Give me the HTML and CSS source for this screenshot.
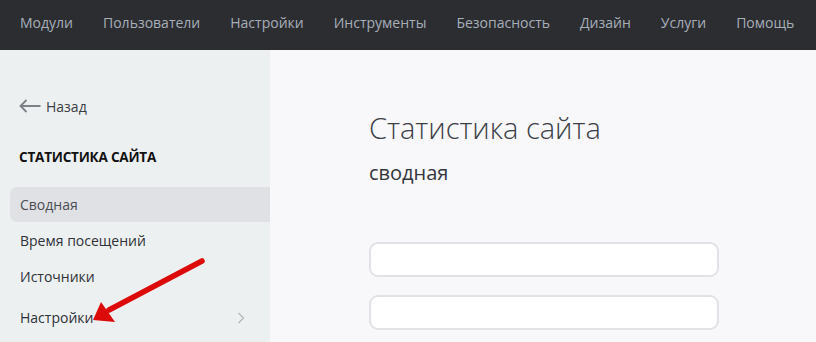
FILE: index.html
```html
<!DOCTYPE html>
<html lang="ru">
<head>
    <meta charset="UTF-8">
    <title>Статистика сайта</title>
    <link rel="stylesheet" href="styles.css">
</head>
<body>
    <div class="topbar">
        <a href="#">Модули</a>
        <a href="#">Пользователи</a>
        <a href="#">Настройки</a>
        <a href="#">Инструменты</a>
        <a href="#">Безопасность</a>
        <a href="#">Дизайн</a>
        <a href="#">Услуги</a>
        <a href="#">Помощь</a>
    </div>

    <div class="layout">
        <div class="sidebar">
            <a href="#" class="back">
                <svg width="22" height="14" viewBox="0 0 22 14"><path d="M7.5 1 L1.5 7 L7.5 13 M1.5 7 H21.5" fill="none" stroke="#7d8085" stroke-width="1.8"/></svg>
                Назад
            </a>
            <div class="section-title">СТАТИСТИКА САЙТА</div>
            <ul class="menu">
                <li class="active">Сводная</li>
                <li>Время посещений</li>
                <li>Источники</li>
                <li class="has-sub">Настройки
                    <svg width="8" height="12" viewBox="0 0 8 12"><path d="M1.5 1 L6.5 6 L1.5 11" fill="none" stroke="#b5b8bd" stroke-width="1.3"/></svg>
                </li>
            </ul>
            <!-- pointer from the screenshot annotation -->
            <svg class="pointer" width="125" height="80" viewBox="0 0 125 80">
                <path d="M117 11 L24 60" stroke="#dd0a0a" stroke-width="5.5" stroke-linecap="round"/>
                <polygon points="8,70 16,52 30,72" fill="#dd0a0a"/>
            </svg>
        </div>

        <div class="content">
            <h1>Статистика сайта</h1>
            <h2>сводная</h2>
            <div class="fields">
                <input type="text">
                <input type="text">
            </div>
        </div>
    </div>
</body>
</html>
```

FILE: styles.css
```css
body {
    margin: 0;
    font-family: "Open Sans", "Noto Sans", sans-serif;
    background-color: #f8f8fa;
    color: #333;
}
.topbar {
    height: 50px;
    background-color: #2c2d31;
    display: flex;
    align-items: center;
    padding-left: 5px;
}
.topbar a {
    color: #a7afb9;
    text-decoration: none;
    font-size: 14px;
    padding: 0 15px;
    line-height: 44px;
    padding-bottom: 5px;
}
.layout {
    display: flex;
    height: 292px;
}
.sidebar {
    position: relative;
    width: 270px;
    background-color: #edf0f1;
    padding-top: 46px;
    box-sizing: border-box;
}
.back {
    display: flex;
    align-items: center;
    gap: 5px;
    margin-left: 19px;
    color: #3a3d45;
    text-decoration: none;
    font-size: 14px;
    height: 20px;
}
.section-title {
    margin: 31px 0 0 19px;
    font-weight: bold;
    font-size: 13.5px;
    color: #111;
    line-height: 20px;
    letter-spacing: -0.2px;
}
.menu {
    list-style: none;
    margin: 20px 0 0 10px;
    padding: 0;
}
.menu li {
    display: flex;
    align-items: center;
    justify-content: space-between;
    height: 35px;
    padding: 0 25px 0 10px;
    margin-bottom: 1px;
    font-size: 14px;
    color: #2e3138;
    border-radius: 7px 0 0 7px;
}
.menu li.active {
    background-color: #e0e1e4;
    color: #4a4d55;
}
.menu li.has-sub {
    margin-top: 6px;
}
.pointer {
    position: absolute;
    left: 85px;
    top: 200px;
}
.content {
    flex: 1;
    padding: 58px 0 0 99px;
}
h1 {
    margin: 0;
    font-weight: 300;
    font-size: 29px;
    color: #3d4048;
    line-height: 40px;
}
h2 {
    margin: 11px 0 0;
    font-weight: normal;
    font-size: 20px;
    color: #33363d;
    line-height: 28px;
}
.fields {
    margin-top: 55px;
    display: flex;
    flex-direction: column;
    gap: 18px;
}
input {
    width: 350px;
    height: 35px;
    box-sizing: border-box;
    border: 2px solid #e1e2e6;
    border-radius: 9px;
    background-color: #fff;
}
```
